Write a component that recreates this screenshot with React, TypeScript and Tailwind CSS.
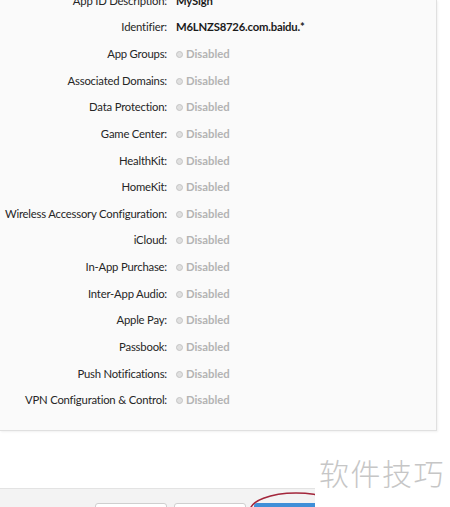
import React from "react";

const rows: { label: string; value?: string; strong?: boolean }[] = [
  { label: "App ID Description:", value: "MySign", strong: true },
  { label: "Identifier:", value: "M6LNZS8726.com.baidu.*", strong: true },
  { label: "App Groups:" },
  { label: "Associated Domains:" },
  { label: "Data Protection:" },
  { label: "Game Center:" },
  { label: "HealthKit:" },
  { label: "HomeKit:" },
  { label: "Wireless Accessory Configuration:" },
  { label: "iCloud:" },
  { label: "In-App Purchase:" },
  { label: "Inter-App Audio:" },
  { label: "Apple Pay:" },
  { label: "Passbook:" },
  { label: "Push Notifications:" },
  { label: "VPN Configuration & Control:" },
];

const Disabled = () => (
  <span className="flex items-center gap-[3px] font-bold text-[#b3b3b3]">
    <span className="h-[7px] w-[7px] rounded-full border border-[#c4c4c4] bg-[#e0e0e0]" />
    Disabled
  </span>
);

export default function App() {
  return (
    <div className="relative h-[507px] w-[450px] overflow-hidden bg-white font-['Lato','Open_Sans',sans-serif] text-[11.3px]">
      <div className="h-[431px] w-[437px] overflow-hidden border-r border-b border-[#e0e0e0] bg-[#fafafa] shadow-[1px_1px_2px_rgba(0,0,0,0.06)]">
        <div className="-mt-[12px] flex flex-col">
          {rows.map((r) => (
            <div key={r.label} className="flex h-[26.64px] items-center">
              <span className="w-[167px] shrink-0 text-right tracking-[-0.2px] text-[#262626]">
                {r.label}
              </span>
              <span className="ml-[9px]">
                {r.value ? (
                  <span className="font-bold tracking-[-0.2px] text-[#1a1a1a]">{r.value}</span>
                ) : (
                  <Disabled />
                )}
              </span>
            </div>
          ))}
        </div>
      </div>

      <div className="mt-[57px] flex h-[20px] gap-[7px] border-t border-[#e3e3e3] bg-[#f3f3f3] pl-[95px] pt-[14px]">
        <div className="h-[20px] w-[72px] rounded-[3px] border border-[#cfcfcf] bg-white" />
        <div className="h-[20px] w-[72px] rounded-[3px] border border-[#cfcfcf] bg-white" />
        <div className="ml-[1px] h-[20px] w-[72px] rounded-[3px] bg-[#3f8fd8]" />
      </div>

      {/* annotation ring around the submit button */}
      <svg className="absolute left-[246px] top-[489px]" width="100" height="40" viewBox="0 0 100 40">
        <ellipse cx="50" cy="22" rx="46" ry="18" fill="none" stroke="#a3263b" strokeWidth="1.6" />
      </svg>

      {/* watermark */}
      <div className="absolute left-[315px] top-[440px] flex h-[67px] w-[135px] items-start bg-white pl-[4px] pt-[17px]">
        <span className="font-['Noto_Sans_CJK_SC',sans-serif] text-[30px] font-light leading-none tracking-[1.5px] text-[#c6c6c6]">
          软件技巧
        </span>
      </div>
    </div>
  );
}
